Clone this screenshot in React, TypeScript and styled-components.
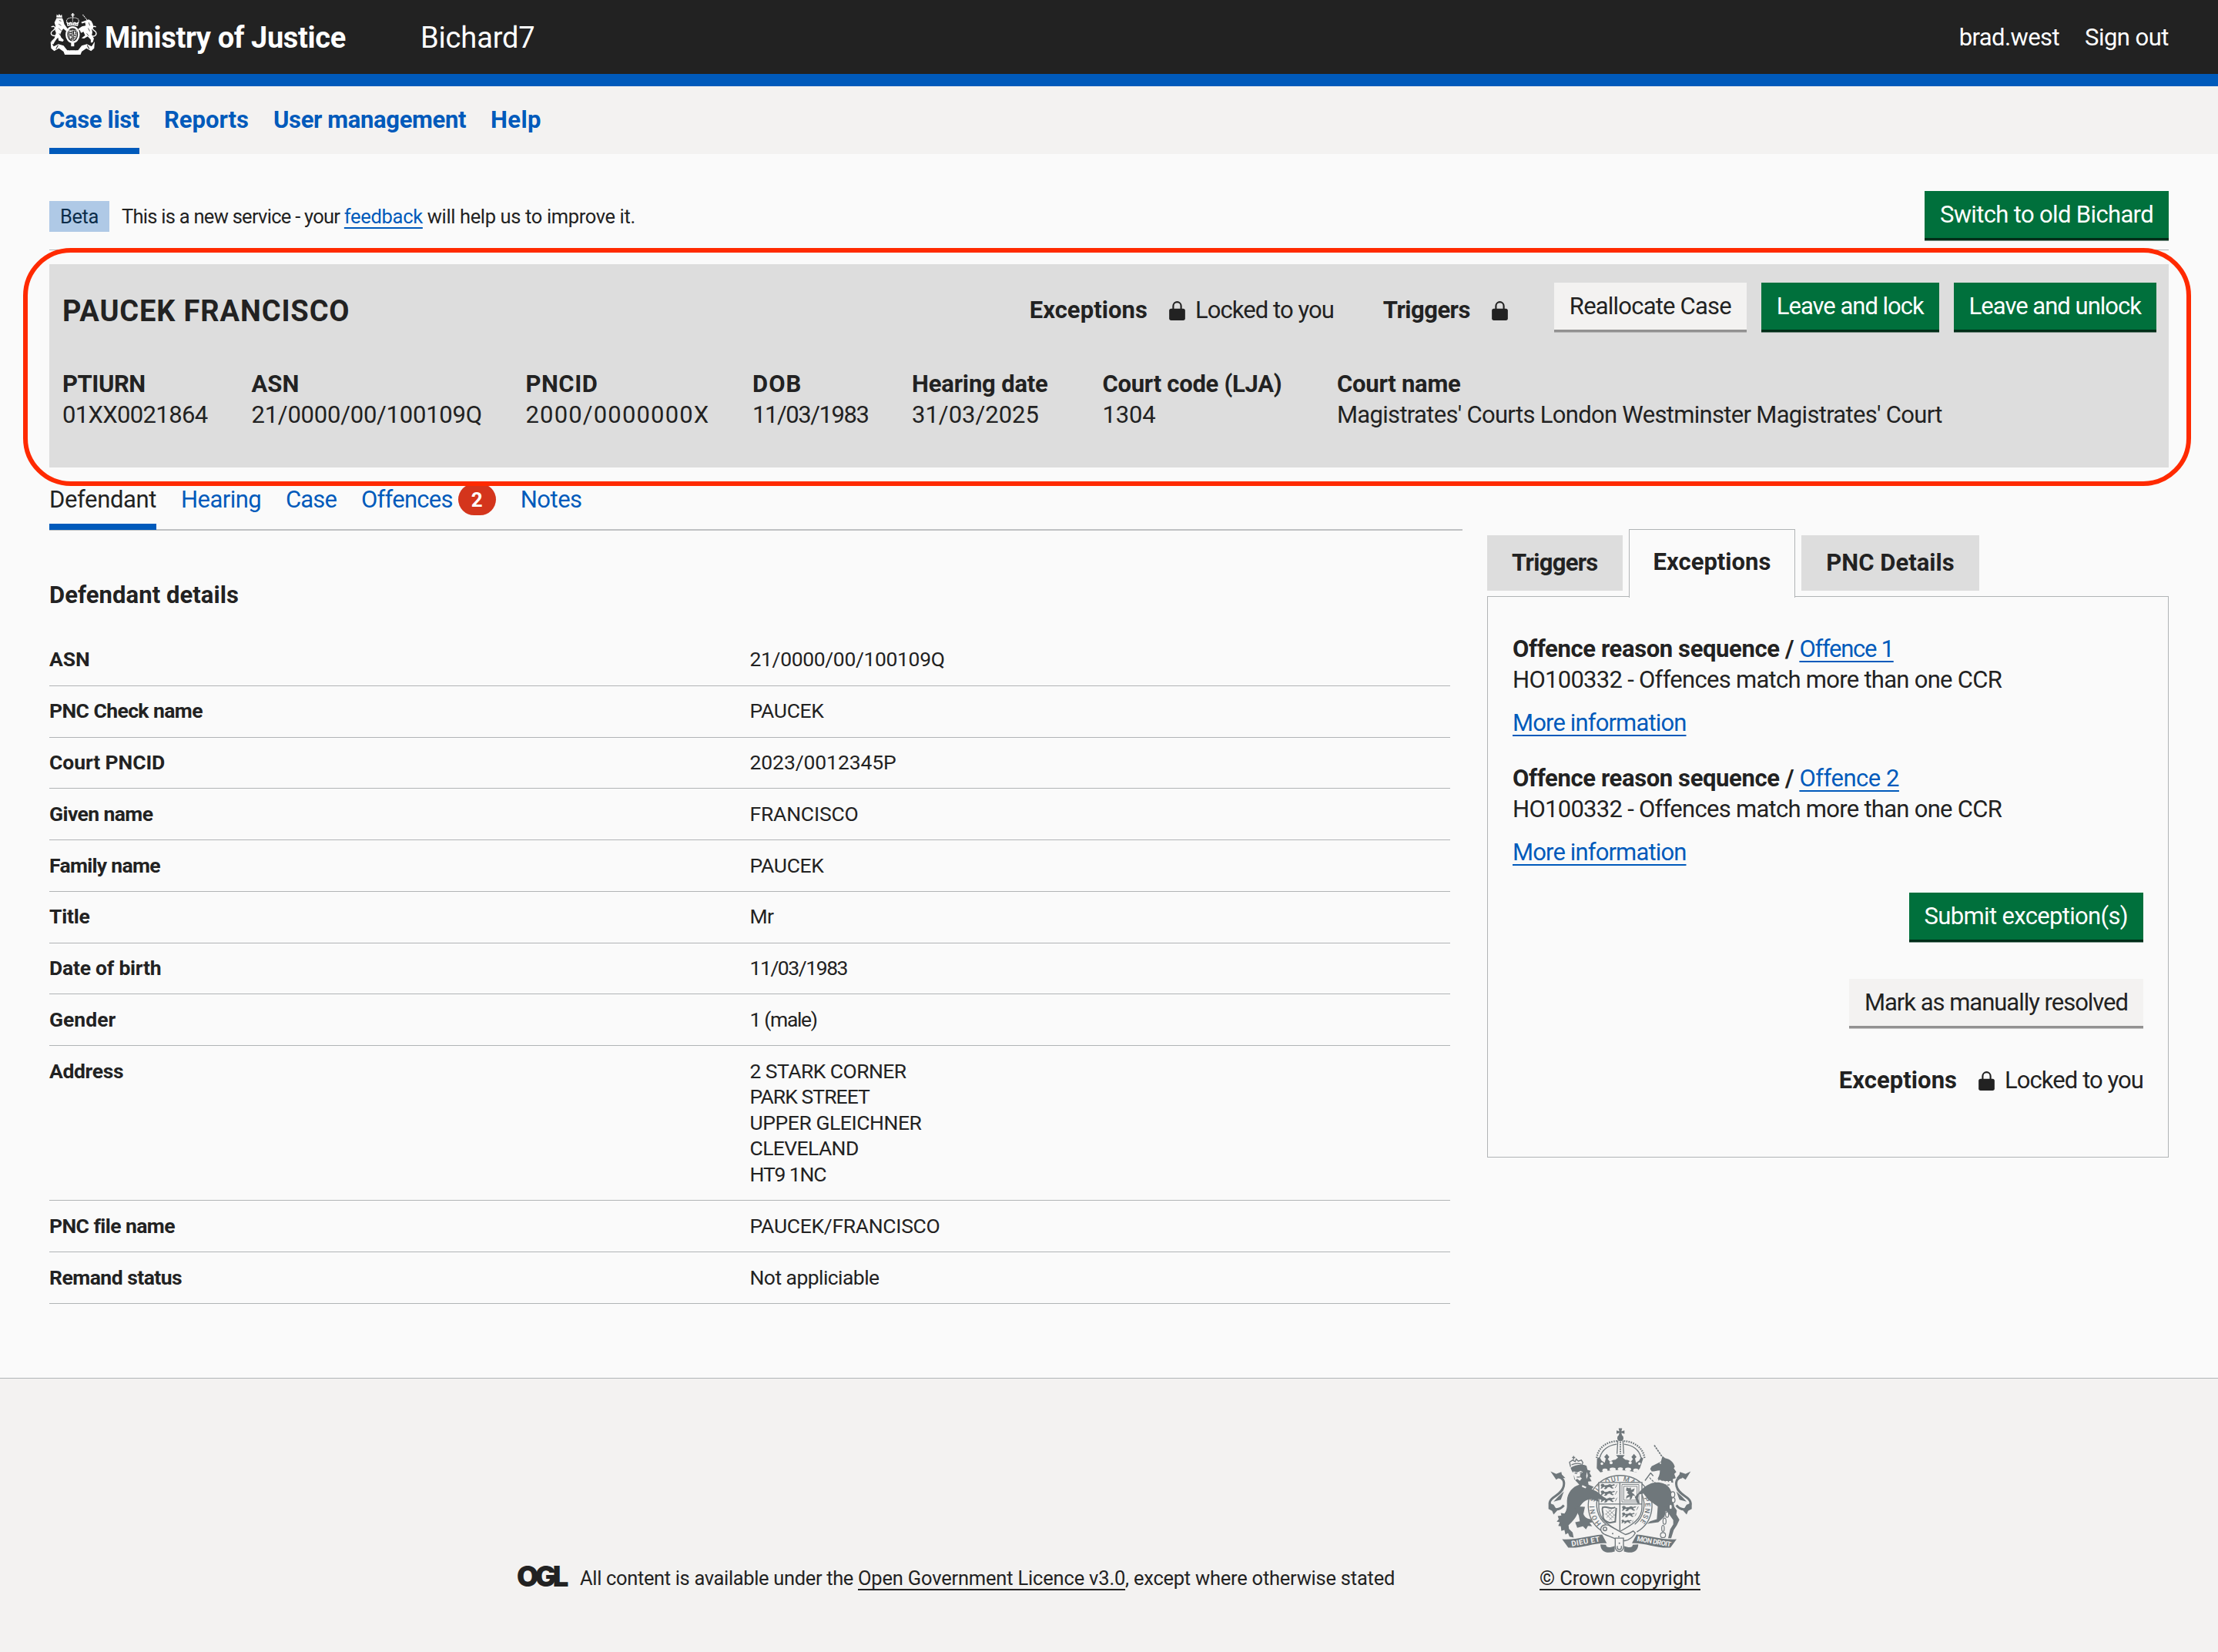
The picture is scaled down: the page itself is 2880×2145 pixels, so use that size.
import React from "react";
import styled, { createGlobalStyle, css } from "styled-components";

const c = {
  ink: "#222222", page: "#fafafa", pale: "#f3f2f1", panel: "#dddddd", line: "#b1b4b6",
  blue: "#005abb", green: "#00703c", red: "#d4351c", mark: "#ff2a00", crest: "#6f777b",
};

const Global = createGlobalStyle`
  body { margin: 0; background: ${c.page}; color: ${c.ink}; font: 31px/40px Roboto, "Liberation Sans", sans-serif; }
  * { box-sizing: border-box; }
`;

/* Text run with its own tracking. */
const T = styled.span<{ $ls: number }>`letter-spacing: ${p => p.$ls}px; white-space: pre;`;

const Page = styled.div`
  position: relative;
  display: flex;
  flex-direction: column;
  width: 2880px;
  height: 2145px;
  overflow: hidden;
`;
const Header = styled.header`
  display: flex;
  align-items: center;
  height: 112px;
  padding: 1px 64px 0;
  background: ${c.ink};
  color: #fff;
  border-bottom: 16px solid ${c.blue};
`;
const Organisation = styled.div`
  display: flex;
  align-items: center;
  gap: 9px;
  width: 482px;
  padding-left: 1px;
  font-size: 38px;
  font-weight: 700;
`;
const Product = styled.div`flex: 1; font-size: 38px;`;
const Account = styled.div`display: flex; gap: 33px; padding-top: 1px;`;

const Nav = styled.nav`
  display: flex;
  gap: 32px;
  height: 88px;
  padding: 0 64px;
  background: ${c.pale};
  color: ${c.blue};
  font-weight: 700;
`;
const NavItem = styled.a<{ $on?: boolean }>`
  padding-top: 24px;
  border-bottom: 8px solid ${p => (p.$on ? c.blue : "transparent")};
`;

const Banner = styled.div`
  display: flex;
  align-items: flex-start;
  height: 125px;
  margin: 0 64px;
  padding-top: 48px;
  border-bottom: 1px solid ${c.line};
  font-size: 25.5px;
`;
const Tag = styled.span`height: 40px; margin: 13px 16px 0 0; padding: 0 14px; background: #afc9e6; color: #0c2d4a;`;
const BannerText = styled.span`flex: 1; margin-top: 13px;`;
const Link = styled.a<{ $dark?: boolean }>`
  color: ${p => (p.$dark ? c.ink : c.blue)};
  text-decoration: underline 2px;
  text-underline-offset: 5px;
  text-decoration-skip-ink: none;
`;
const Button = styled.button<{ $grey?: boolean }>`
  height: 61px;
  padding: 0 20px;
  border: 0;
  border-radius: 0;
  font: 400 31px/61px Roboto, "Liberation Sans", sans-serif;
  ${p => p.$grey
    ? css`background: ${c.pale}; color: ${c.ink}; box-shadow: 0 3.5px 0 #929191;`
    : css`background: ${c.green}; color: #fff; box-shadow: 0 3.5px 0 #002d18;`}
`;

const CaseHeader = styled.section`
  position: relative;
  height: 264px;
  margin: 18px 64px 0;
  padding: 24px 16px 0;
  background: ${c.panel};
`;
const Highlight = styled.div`
  position: absolute;
  inset: -21px -29px -24px -34px;
  border: 6px solid ${c.mark};
  border-radius: 62px;
  z-index: 1;
  pointer-events: none;
`;
const TitleRow = styled.div`display: flex; align-items: flex-start; height: 112px; padding-left: 1px;`;
const CaseName = styled.h1`flex: 1; margin: 12.5px 0 0; font-size: 38px; line-height: 48px; font-weight: 700;`;
const LockRow = styled.div`display: flex; align-items: center; height: 40px;`;
const HeaderLocks = styled.div`display: flex; gap: 64px; margin: 16px 60px 0 0;`;
const LockLabel = styled.b`margin-right: 28px;`;
const LockIcon = styled.svg`width: 21px; height: 25px; margin-top: 1px; fill: ${c.ink};`;
const LockText = styled.span`margin-left: 13px;`;
const ButtonRow = styled.div`display: flex; gap: 19px;`;
const Facts = styled.dl`
  display: grid;
  grid-template-columns: 245.5px 356px 294.5px 207px 247.5px 304.5px auto;
  margin: 0;
  padding-left: 1px;
`;
const Fact = styled.div`display: flex; flex-direction: column;`;
const Term = styled.dt`font-weight: 700;`;
const Value = styled.dd`margin: 0;`;

const Columns = styled.main`display: flex; justify-content: space-between; height: 1182px; margin: 0 64px;`;
const Left = styled.div`width: 1835px;`;
const Right = styled.aside`width: 885px; padding-top: 80px;`;
const Tabs = styled.div`
  display: flex;
  gap: 32px;
  height: 82px;
  padding-top: 22px;
  border-bottom: 2px solid #bfc1c3;
`;
const Tab = styled.a<{ $on?: boolean }>`
  display: flex;
  height: 59px;
  color: ${p => (p.$on ? c.ink : c.blue)};
  border-bottom: 8px solid ${p => (p.$on ? c.blue : "transparent")};
`;
const Badge = styled.span`
  width: 49px;
  height: 41px;
  margin: -1px 0 0 7px;
  border-radius: 20.5px;
  background: ${c.red};
  color: #fff;
  font: 700 26px/43px Roboto, sans-serif;
  text-align: center;
`;
const Heading = styled.h2`margin: 64px 0 31px; font-size: 31px; line-height: 40px;`;
const Table = styled.div`width: 1819px; font-size: 26.5px; line-height: 33.6px;`;
const Row = styled.div`display: flex; padding: 15.4px 0 16.8px; border-bottom: 1px solid ${c.line};`;
const RowLabel = styled.div`width: 909.5px; font-weight: 700;`;
const RowValue = styled.div`display: flex; flex-direction: column; align-items: flex-start;`;

const SideTabs = styled.div`display: flex; gap: 8px; align-items: flex-start; height: 87px;`;
const SideTab = styled.a<{ $on?: boolean }>`
  font-weight: 700;
  ${p => p.$on
    ? css`
        position: relative;
        z-index: 1;
        height: 89px;
        padding: 22px 31px 0;
        background: ${c.page};
        border: 1px solid ${c.line};
        border-bottom: 0;
      `
    : css`height: 72px; margin-top: 8px; padding: 15.5px 32px 0; background: ${c.panel};`}
`;
const Panel = styled.div`height: 729px; padding: 48.4px 32px 0; border: 1px solid ${c.line};`;
const Exception = styled.div`display: flex; flex-direction: column; align-items: flex-start; height: 168px;`;
const More = styled.div`margin-top: 16px;`;
const Actions = styled.div`display: flex; flex-direction: column; align-items: flex-end; gap: 50.6px;`;

const Footer = styled.footer`
  flex: 1;
  display: flex;
  justify-content: space-between;
  padding: 0 672px;
  border-top: 1px solid ${c.line};
  background: ${c.pale};
  font-size: 25.5px;
`;
const Licence = styled.div`display: flex; padding-top: 239.3px;`;
const Ogl = styled.span`width: 82px; margin-left: -1px; padding-right: 1px; font: 900 36.5px/37px Inter, sans-serif; letter-spacing: -4.6px;`;
const Copyright = styled.div`display: flex; flex-direction: column; align-items: center; padding-top: 64px;`;
const FooterCrest = styled.svg`width: 187px; height: 164px; margin-bottom: 11.3px;`;
const HeaderCrest = styled.svg`width: 62px; height: 54px; margin-top: -10px;`;

const Lock = () => (
  <LockIcon viewBox="57 62 63 76">
    <rect x="57" y="92" width="63" height="46" rx="8" />
    <path d="M73 96V81a15.5 15.5 0 0 1 31 0V96" fill="none" stroke={c.ink} strokeWidth="6.5" />
  </LockIcon>
);

const LockState = ({ label, ls, text }: { label: string; ls: number; text?: string }) => (
  <LockRow>
    <LockLabel><T $ls={ls}>{label}</T></LockLabel>
    <Lock />
    {text && <LockText><T $ls={-0.93}>{text}</T></LockText>}
  </LockRow>
);

/* One walking lion of the shield's quarters. */
const Passant = ({ x, y, s = 1 }: { x: number; y: number; s?: number }) => (
  <g transform={`translate(${x} ${y}) scale(${s})`}>
    <path d="M0 5l6-5 8 2 3 5 12-1 10-4 10 3 8-3 6 3-6 3-6 1-2 5 8 4-4 4-8-3-5-5-9 1-4 6-7 3-6-2 6-5-2-4-8 3-4 5-6 1 4-9z" />
    <path d="M62 18c8-4 4-12 10-15" fill="none" strokeWidth="3" />
  </g>
);

const RoyalArms = () => (
  <FooterCrest viewBox="152 71 561 491" fill={c.crest} stroke={c.crest} strokeWidth="0">
    <defs>
      <path id="garter" d="M363 447A99 99 0 1 1 501 447" />
    </defs>
    {/* garter */}
    <g fill="none" strokeWidth="4">
      <path d="M368 476A124 119 0 1 1 498 476" />
      <path d="M378 446A90 95 0 0 1 350 330M518 330A90 95 0 0 1 490 446" />
    </g>
    <text fontFamily="Roboto, sans-serif" fontSize="27" fontWeight="500">
      <textPath href="#garter" startOffset="1%" textLength="450">HONI SOIT QUI MAL Y PENSE</textPath>
    </text>
    {/* crown */}
    <path d="M430 84l-3-12h14l-3 12 12-4v14l-12-4 3 12h-14l3-12-11 4V80z" />
    <circle cx="434" cy="110" r="12" />
    <g fill="none">
      <path d="M342 188C345 150 380 122 424 122M528 188C524 150 488 122 444 122" strokeWidth="7" strokeDasharray="5 4" />
      <path d="M354 186C362 156 388 138 420 134M514 186C508 156 482 138 448 134" strokeWidth="4" />
      <path d="M424 120L421 172M444 120L447 172" strokeWidth="4" />
      <path d="M434 124V172" strokeWidth="6" strokeDasharray="5 4" />
    </g>
    <path d="M343 190l10-6 8 14 12 8 4-16-6-6 10-12 10 12-6 8 8 10 12-6 10-2 10-8-8-10h34l-8 10 10 8 10 2 12 6 8-10-6-8 10-12 10 12-6 6 4 16 12-8 8-14 8 6-13 38-14 16c-50-12-96-12-140 0l-14-16z" />
    <g fill={c.pale}>
      <circle cx="362" cy="210" r="5" /><circle cx="398" cy="206" r="6" /><circle cx="472" cy="206" r="6" /><circle cx="508" cy="210" r="5" />
      <ellipse cx="374" cy="236" rx="10" ry="7" /><ellipse cx="404" cy="232" rx="12" ry="7" /><ellipse cx="434" cy="230" rx="10" ry="6" />
      <ellipse cx="464" cy="232" rx="12" ry="7" /><ellipse cx="494" cy="236" rx="10" ry="7" />
    </g>
    {/* shield */}
    <path d="M350 283H518V380C518 425 480 448 432 474 384 448 350 425 350 380Z" fill={c.pale} strokeWidth="4" />
    <path d="M432 284V470M350 367H518" strokeWidth="4" />
    <path d="M440 291h66v68h-66zM447 298h52v54h-52z" fill="none" strokeWidth="2.5" />
    <path d="M458 302l10 4 6-4 2 10 14-6-4 12-8 4 8 6 6 8-10-2-4 12-8 4 2-12-10 4-6 6 2-12 10-6-8-6 4-6-8-4z" />
    <Passant x={357} y={288} s={0.9} /><Passant x={357} y={314} s={0.9} /><Passant x={357} y={340} s={0.9} />
    <Passant x={440} y={374} s={0.9} /><Passant x={440} y={400} s={0.8} /><Passant x={438} y={428} s={0.65} />
    <g fill="none">
      <path d="M366 378c-8 14 4 22 0 36 0 14 12 22 26 26l22-4 4-54M366 380c18-6 26 10 48 0" strokeWidth="6" />
      <path d="M378 392l30 30M388 388l24 24M376 404l26 26M380 420l32-30M376 408l24-20M390 430l22-22" strokeWidth="2" />
    </g>
    {/* belt */}
    <path d="M358 462c4-16 26-18 40-6l56 30c14-2 24-10 30-14l8 8c-8 16-22 26-40 30-26 2-60-18-78-24-10-4-18-14-16-24z" fill={c.pale} strokeWidth="4" />
    <circle cx="374" cy="464" r="7" fill="none" strokeWidth="4" />
    <circle cx="404" cy="482" r="3" /><circle cx="428" cy="494" r="3" />
    <path d="M414 500h32v34a16 18 0 0 1-32 0z" fill={c.pale} strokeWidth="4" />
    <circle cx="430" cy="520" r="3" />
    <path d="M422 530v6a8 8 0 0 0 16 0v-6" fill="none" strokeWidth="4" />
    {/* lion */}
    <path d="M240 222l-4-18 12-8 10 6 4-10 8 8 12-4 6 10-6 14M252 180v14M246 186h12M244 214c14-6 28-6 38-2" fill="none" strokeWidth="4" />
    <path d="M240 226c18-12 44-16 62-8l4 16 12 4-4 8 8 14-8 4 8 14-14 2 2 12 20 8-8 10c30 8 34 26 56 34l-8 10-24-8 4 12-30-10c-30 2-46 26-52 52-6 22-22 36-36 50l2 14 14 14 4 20-16-4-6-14-10 6-4-18-12 4-2-18-10-2 6-14-12-2 8-10-4-12 14-2-2-10 14 2c12-14 10-30 10-50 2-32 22-54 48-62l-20-22-2-20-8-14z" />
    <path d="M252 376l44 2-6 28c6 14 16 20 28 20l8 12-12 2 10 14-16-2-8 14-12-12-22 6-8-22 18-4-4-22z" />
    <g fill={c.pale}>
      <path d="M252 240l14 4 14-6 8 5-10 6-2 12 8 6-8 10-10-8-8 5-4-16-8-8z" />
      <path d="M286 293l16 8-4 5-14-6zM304 242l3 16-5 12-1-14z" />
    </g>
    <path d="M256 246l10 2M276 246l8-3M264 262h12" strokeWidth="4" />
    <path d="M214 372c-24 28-58 14-55-12 4-24 46-26 54-62 5-22-4-34-22-36" fill="none" strokeWidth="9" />
    <path d="M162 240l22 10 20-8 2 10 14 14-24-2-12 8zM214 318l-12 32-28 8 18-20zM154 362l20 8 14 22-14 16-6-14-14-8z" />
    {/* unicorn */}
    <path d="M566 138L596 182" strokeWidth="5" strokeDasharray="8 3" />
    <path d="M598 180l10 8c22 4 34 18 38 34l-4 6 10 14-8 8 6 16-12 4 2 14-12-2-54-8c10-10 14-24 14-38-12 0-20 4-32 4l-6-10 6-10 36-18z" />
    <path d="M556 250c12 24 44 34 76 30" fill="none" stroke={c.pale} strokeWidth="6" strokeDasharray="9 4" />
    <path d="M548 264c16 24 46 32 78 28" fill="none" strokeWidth="4" strokeDasharray="9 4" />
    <path d="M530 276l22-30M552 246l10 12" fill="none" strokeWidth="4" />
    <path d="M518 310c24-24 56-34 86-22 20 8 28 26 32 44l8 46 10 14-2 16 12 20-10 22-12 18-10 32h-12l8-34 12-20v-16l-24-34c-28-10-50-30-72-44l-20-26-18 4-4 14 8 22-10-2-10-24z" />
    <path d="M580 372l34 6-8 38-24 22-44 6 12-10 26-8z" />
    <path d="M652 372c24 28 58 14 55-12-4-24-46-26-54-62-5-22 4-34 22-36" fill="none" strokeWidth="9" />
    <path d="M708 240l-20 10-22-8-2 10-12 14 24-2 12 8zM652 318l12 32 28 8-18-20zM712 362l-20 8-14 22 14 16 6-14 14-8z" />
    <g fill={c.pale} strokeWidth="3.5">
      <ellipse cx="638" cy="330" rx="8" ry="11" /><ellipse cx="640" cy="352" rx="7" ry="10" /><ellipse cx="630" cy="378" rx="6" ry="10" />
      <ellipse cx="616" cy="408" rx="6" ry="11" /><ellipse cx="606" cy="434" rx="6" ry="12" /><ellipse cx="600" cy="462" rx="5" ry="12" /><circle cx="600" cy="488" r="10" />
    </g>
    <circle cx="590" cy="208" r="3" fill={c.pale} />
    {/* ribbon */}
    <path d="M207 504c54 4 106-14 156-18l18 34c-46-4-92 20-150 17z" />
    <path d="M653 504c-54 4-106-14-156-18l-18 34c46-4 92 20 150 17z" />
    <path d="M356 524l22 2c0 14 20 10 34 4v22c-26 8-54 6-56-28zM504 524l-22 2c0 14-20 10-34 4v22c26 8 54 6 56-28z" />
    <text fontFamily="Roboto, sans-serif" fontSize="29" fontWeight="700" fill={c.pale} transform="translate(245 532) rotate(-10)" textLength="112">DIEU ET</text>
    <text fontFamily="Roboto, sans-serif" fontSize="27" fontWeight="700" fill={c.pale} transform="translate(498 511) rotate(10)" textLength="134">MON DROIT</text>
  </FooterCrest>
);

const SmallArms = () => (
  <HeaderCrest viewBox="49 34 184 160" fill="#fff" stroke="#fff" strokeWidth="0">
    {/* crown */}
    <path d="M134 34h5v5h4v4h-4v6h-5v-6h-4v-4h4z" />
    <g fill="none" strokeWidth="3">
      <path d="M114 70c-6-12 8-20 22-18 16-2 28 6 22 18M136 50v20" strokeDasharray="4 2" />
    </g>
    <path d="M112 66l8 6 8-4 8 4 8-4 8 4 8-6-4 18c-14-4-26-4-40 0z" />
    <path d="M118 78c12-3 24-3 36 0" fill="none" stroke={c.ink} strokeWidth="2.5" strokeDasharray="5 3" />
    {/* garter and shield */}
    <ellipse cx="136" cy="117" rx="24" ry="29" fill="none" strokeWidth="7" />
    <path d="M121 100h30v20c0 10-7 15-15 20-8-5-15-10-15-20zM136 98v44M120 119h31" fill="none" strokeWidth="2" />
    <path d="M124 103h9v4h-9zM124 111h9v4h-9zM141 103l8 4-4 4 4 5h-7zM124 123h8v8h-5zM140 123h9v4h-9zM140 131h6v4h-6z" />
    {/* lion */}
    <path d="M73 50l2-12 5 6 4-7 5 7 5-5 2 12z" />
    <path d="M74 53h22l4 8 4 16 12 16 4 8-10 1-10-8-6 8-6 14 4 12 10 10-4 6-16-4-2-12-6 6-8 12-4 8-10-2 2-10 12-12 6-20-4-10 2-16-4-14z" />
    <path d="M76 118c-14 8-26 0-22-10 2-8 16-8 14-18-2-6-8-6-14-3" fill="none" strokeWidth="4" />
    {/* unicorn */}
    <path d="M175 40l18 22" strokeWidth="3" strokeDasharray="5 2" />
    <path d="M190 61l8-3 10 6 6 12 2 12-6 8 2 12-2 10 8 14-4 14-8 2 0-12-12-12-14 8-10-2 14-10-6-14-10 4-4-10-6 1 0-6 14-10 14-3-2-12-12 4-3-5z" />
    <path d="M206 120c14 8 24-2 20-12-4-8-16-8-14-18 2-6 8-6 14-3" fill="none" strokeWidth="4" />
    {/* ribbon */}
    <path d="M51 144l12 18 18-9 20 6 14 18h42l14-18 20-6 18 9 12-18-2 26-12 10-18-10-18 12-6 16c-18 8-42 8-58 0l-6-16-18-12-18 10-12-10z" />
    <path d="M112 165l14 12M160 165l-14 12M80 158l-8 14M192 158l8 14" fill="none" stroke={c.ink} strokeWidth="3" />
    <path d="M84 62l8 3M82 76l10 6M82 92l10 10M84 112l6 10M198 70l4 12M196 92l6 12M190 112l8 10" stroke={c.ink} strokeWidth="2.2" />
    <path d="M130 148h12v14h-12z" />
  </HeaderCrest>
);

const facts: [string, number, string, number][] = [
  ["PTIURN", -0.45, "01XX0021864", -0.66],
  ["ASN", 0, "21/0000/00/100109Q", -0.24],
  ["PNCID", 0.5, "2000/0000000X", 1.16],
  ["DOB", 1, "11/03/1983", -1.45],
  ["Hearing date", -0.18, "31/03/2025", 0],
  ["Court code (LJA)", -0.27, "1304", -0.18],
  ["Court name", -0.25, "Magistrates' Courts London Westminster Magistrates' Court", -0.69],
];

const details: [string, number, [string, number][]][] = [
  ["ASN", 0, [["21/0000/00/100109Q", -0.36]]],
  ["PNC Check name", -0.58, [["PAUCEK", -0.35]]],
  ["Court PNCID", -0.08, [["2023/0012345P", -0.1]]],
  ["Given name", -0.6, [["FRANCISCO", -0.2]]],
  ["Family name", -0.7, [["PAUCEK", -0.35]]],
  ["Title", -0.25, [["Mr", -0.56]]],
  ["Date of birth", -0.24, [["11/03/1983", -1.45]]],
  ["Gender", 0, [["1 (male)", -1.35]]],
  ["Address", -0.35, [["2 STARK CORNER", -0.56], ["PARK STREET", -0.95], ["UPPER GLEICHNER", -0.45], ["CLEVELAND", -0.6], ["HT9 1NC", -1.15]]],
  ["PNC file name", -0.58, [["PAUCEK/FRANCISCO", -0.31]]],
  ["Remand status", -0.52, [["Not appliciable", -0.56]]],
];

const offences: [string, number][] = [["Offence 1", -1.28], ["Offence 2", -0.48]];

export default function App() {
  return (
    <Page>
      <Global />
      <Header>
        <Organisation><SmallArms /><T $ls={-0.36}>Ministry of Justice</T></Organisation>
        <Product><T $ls={-0.15}>Bichard7</T></Product>
        <Account><T $ls={-0.6}>brad.west</T><T $ls={-0.51}>Sign out</T></Account>
      </Header>
      <Nav>
        <NavItem $on><T $ls={-0.34}>Case list</T></NavItem>
        <NavItem><T $ls={-0.01}>Reports</T></NavItem>
        <NavItem><T $ls={-0.36}>User management</T></NavItem>
        <NavItem><T $ls={0.35}>Help</T></NavItem>
      </Nav>
      <Banner>
        <Tag><T $ls={-0.41}>Beta</T></Tag>
        <BannerText>
          <T $ls={-0.73}>{"This is a new service - your "}</T>
          <Link><T $ls={-0.31}>feedback</T></Link>
          <T $ls={-0.37}>{" will help us to improve it."}</T>
        </BannerText>
        <Button><T $ls={-0.65}>Switch to old Bichard</T></Button>
      </Banner>
      <CaseHeader>
        <TitleRow>
          <CaseName><T $ls={0.87}>PAUCEK FRANCISCO</T></CaseName>
          <HeaderLocks>
            <LockState label="Exceptions" ls={0.05} text="Locked to you" />
            <LockState label="Triggers" ls={-0.52} />
          </HeaderLocks>
          <ButtonRow>
            <Button $grey><T $ls={-0.8}>Reallocate Case</T></Button>
            <Button><T $ls={-1.02}>Leave and lock</T></Button>
            <Button><T $ls={-0.99}>Leave and unlock</T></Button>
          </ButtonRow>
        </TitleRow>
        <Facts>
          {facts.map(([k, kls, v, vls]) => (
            <Fact key={k}>
              <Term><T $ls={kls}>{k}</T></Term>
              <Value><T $ls={vls}>{v}</T></Value>
            </Fact>
          ))}
        </Facts>
        <Highlight />
      </CaseHeader>
      <Columns>
        <Left>
          <Tabs>
            <Tab $on><T $ls={-0.37}>Defendant</T></Tab>
            <Tab><T $ls={-0.57}>Hearing</T></Tab>
            <Tab><T $ls={-0.87}>Case</T></Tab>
            <Tab><T $ls={-0.76}>Offences</T><Badge>2</Badge></Tab>
            <Tab><T $ls={-0.5}>Notes</T></Tab>
          </Tabs>
          <Heading><T $ls={0.06}>Defendant details</T></Heading>
          <Table>
            {details.map(([k, kls, values]) => (
              <Row key={k}>
                <RowLabel><T $ls={kls}>{k}</T></RowLabel>
                <RowValue>{values.map(([v, vls]) => <T key={v} $ls={vls}>{v}</T>)}</RowValue>
              </Row>
            ))}
          </Table>
        </Left>
        <Right>
          <SideTabs>
            <SideTab><T $ls={-0.7}>Triggers</T></SideTab>
            <SideTab $on><T $ls={0}>Exceptions</T></SideTab>
            <SideTab><T $ls={0.02}>PNC Details</T></SideTab>
          </SideTabs>
          <Panel>
            {offences.map(([name, ls]) => (
              <Exception key={name}>
                <div><b><T $ls={-0.38}>{"Offence reason sequence / "}</T></b><Link><T $ls={ls}>{name}</T></Link></div>
                <T $ls={-0.72}>HO100332 - Offences match more than one CCR</T>
                <More><Link><T $ls={-0.86}>More information</T></Link></More>
              </Exception>
            ))}
            <Actions>
              <Button><T $ls={-0.66}>Submit exception(s)</T></Button>
              <Button $grey><T $ls={-1.02}>Mark as manually resolved</T></Button>
              <LockState label="Exceptions" ls={0.05} text="Locked to you" />
            </Actions>
          </Panel>
        </Right>
      </Columns>
      <Footer>
        <Licence>
          <Ogl>OGL</Ogl>
          <span>
            <T $ls={-0.35}>{"All content is available under the "}</T>
            <Link $dark><T $ls={-0.19}>Open Government Licence v3.0</T></Link>
            <T $ls={-0.24}>, except where otherwise stated</T>
          </span>
        </Licence>
        <Copyright>
          <RoyalArms />
          <Link $dark><T $ls={-0.13}>© Crown copyright</T></Link>
        </Copyright>
      </Footer>
    </Page>
  );
}
